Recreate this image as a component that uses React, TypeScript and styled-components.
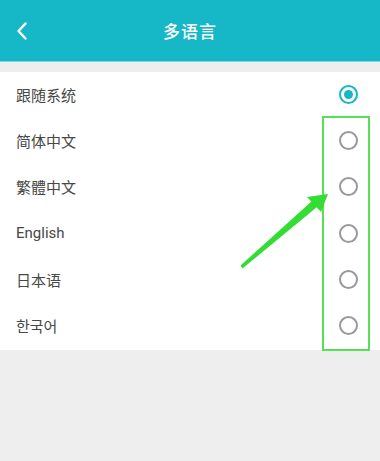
import { useState } from "react";
import styled, { createGlobalStyle } from "styled-components";

const GlobalStyle = createGlobalStyle`
  html, body {
    margin: 0;
    padding: 0;
    background: #eeeeee;
    font-family: Roboto, "Noto Sans CJK SC", "Noto Sans CJK KR", sans-serif;
  }
`;

const Page = styled.div`
  position: relative;
  width: 380px;
  height: 461px;
  background: #eeeeee;
  overflow: hidden;
`;

const Header = styled.header`
  display: flex;
  align-items: center;
  justify-content: center;
  position: relative;
  height: 61px;
  background: #16b7c6;
  border-bottom: 1px solid #7fd6de;
`;

const BackButton = styled.button`
  position: absolute;
  left: 10px;
  top: 50%;
  transform: translateY(-50%);
  display: flex;
  align-items: center;
  justify-content: center;
  width: 24px;
  height: 30px;
  padding: 0;
  border: none;
  background: none;
`;

const Title = styled.h1`
  margin: 0;
  font-size: 17px;
  font-weight: 500;
  color: #ffffff;
  letter-spacing: 1px;
`;

const List = styled.ul`
  list-style: none;
  margin: 10px 0 0;
  padding: 0;
  background: #ffffff;
`;

const Row = styled.li`
  display: flex;
  align-items: center;
  justify-content: space-between;
  height: 46.3px;
  padding: 0 22px 2px 16px;
  box-sizing: border-box;
  font-size: 15px;
  color: #474747;
  cursor: pointer;
`;

const Radio = styled.span<{ $checked: boolean }>`
  display: flex;
  align-items: center;
  justify-content: center;
  box-sizing: border-box;
  width: 19px;
  height: 19px;
  border-radius: 50%;
  border: 2px solid ${({ $checked }) => ($checked ? "#16b7c6" : "#999999")};

  &::after {
    content: "";
    width: 9px;
    height: 9px;
    border-radius: 50%;
    background: #16b7c6;
    display: ${({ $checked }) => ($checked ? "block" : "none")};
  }
`;

const Highlight = styled.div`
  position: absolute;
  left: 322px;
  top: 116px;
  width: 44px;
  height: 231px;
  border: 2px solid #55e055;
`;

const Arrow = styled.svg`
  position: absolute;
  left: 0;
  top: 0;
  pointer-events: none;
`;

const languages = ["跟随系统", "简体中文", "繁體中文", "English", "日本语", "한국어"];

export default function App() {
  const [selected, setSelected] = useState(0);

  return (
    <Page>
      <GlobalStyle />
      <Header>
        <BackButton aria-label="back">
          <svg width="12" height="20" viewBox="0 0 12 20">
            <path d="M9.5 2.5 L2.5 10 L9.5 17.5" fill="none" stroke="#fff" strokeWidth="2.4" strokeLinecap="round" strokeLinejoin="round" />
          </svg>
        </BackButton>
        <Title>多语言</Title>
      </Header>

      <List>
        {languages.map((lang, i) => (
          <Row key={lang} onClick={() => setSelected(i)}>
            <span>{lang}</span>
            <Radio $checked={selected === i} />
          </Row>
        ))}
      </List>

      <Highlight />
      <Arrow width="380" height="461" viewBox="0 0 380 461">
        <polygon points="240.5,265.5 242.5,268.5 317,207 312,201" fill="#33dd33" />
        <polygon points="328,194 307,197 321,212" fill="#33dd33" />
      </Arrow>
    </Page>
  );
}
